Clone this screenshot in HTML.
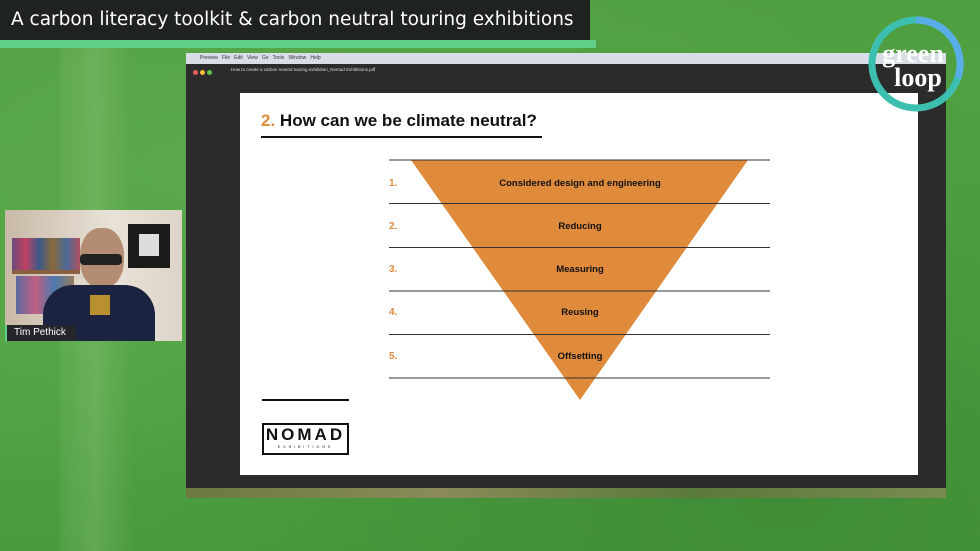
<!DOCTYPE html>
<html><head><meta charset="utf-8"><style>
body{margin:0;width:980px;height:551px;overflow:hidden;position:relative;font-family:"Liberation Sans",sans-serif;
background:radial-gradient(ellipse at 20% 30%,#5aa84a,transparent 60%),radial-gradient(ellipse at 80% 90%,#3f8c36,transparent 60%),linear-gradient(180deg,#4f9e40,#52a546 60%,#4a9a3e);}
.abs{position:absolute}
</style></head><body>
<div class="abs" style="left:60px;top:0;width:70px;height:551px;background:linear-gradient(90deg,rgba(160,200,140,.1),rgba(200,230,180,.18),rgba(120,170,100,.08))"></div>
<div class="abs" style="left:0;top:40px;width:596px;height:8px;background:#5fcf8a"></div>
<div class="abs" style="left:0;top:0;width:590px;height:40px;background:#1f2320"></div>
<div class="abs" style="left:11px;top:9px;color:#fff;font-size:18.5px;font-family:'DejaVu Sans',sans-serif;">A carbon literacy toolkit &amp; carbon neutral touring exhibitions</div>

<div class="abs" style="left:186px;top:53px;width:760px;height:11px;background:#d9dde6"></div>
<div class="abs" style="left:200px;top:55px;font-size:5px;color:#333">Preview &nbsp; File &nbsp; Edit &nbsp; View &nbsp; Go &nbsp; Tools &nbsp; Window &nbsp; Help</div>
<div class="abs" style="left:186px;top:64px;width:760px;height:424px;background:#2b2b2b"></div>
<div class="abs" style="left:193px;top:70px;width:5px;height:5px;border-radius:50%;background:#ed5f56"></div>
<div class="abs" style="left:200px;top:70px;width:5px;height:5px;border-radius:50%;background:#f5bd3b"></div>
<div class="abs" style="left:207px;top:70px;width:5px;height:5px;border-radius:50%;background:#5fc845"></div>
<div class="abs" style="left:231px;top:67px;font-size:4.5px;color:#ddd">How to create a carbon neutral touring exhibition_Nomad Exhibitions.pdf</div>
<div class="abs" style="left:186px;top:488px;width:760px;height:10px;background:linear-gradient(90deg,#6a7a40,#8a8a5a,#5a7a3a,#7a8a50)"></div>

<div class="abs" style="left:240px;top:93px;width:678px;height:382px;background:#fff"></div>
<div class="abs" style="left:261px;top:111px;font-size:17px;font-weight:bold;color:#111"><span style="color:#e08a3c">2.</span> How can we be climate neutral?</div>
<div class="abs" style="left:261px;top:136px;width:281px;height:2px;background:#111"></div>

<svg class="abs" style="left:0;top:0" width="980" height="551">
<polygon points="411,160 748,160 580,400" fill="#e08a3c"/>
<g stroke="#333" stroke-width="1">
<line x1="389" y1="160" x2="770" y2="160"/><line x1="389" y1="203.5" x2="770" y2="203.5"/>
<line x1="389" y1="247.5" x2="770" y2="247.5"/><line x1="389" y1="291" x2="770" y2="291"/>
<line x1="389" y1="334.5" x2="770" y2="334.5"/><line x1="389" y1="378" x2="770" y2="378"/></g>
<g font-family="Liberation Sans" font-size="10" fill="#e08a3c" font-weight="bold">
<text x="389" y="186">1.</text><text x="389" y="229">2.</text><text x="389" y="272">3.</text><text x="389" y="315">4.</text><text x="389" y="359">5.</text></g>
<g font-family="Liberation Sans" font-size="9.5" fill="#111" font-weight="bold" text-anchor="middle">
<text x="580" y="186">Considered design and engineering</text><text x="580" y="229">Reducing</text>
<text x="580" y="272">Measuring</text><text x="580" y="315">Reusing</text><text x="580" y="359">Offsetting</text></g>
<circle cx="916" cy="64" r="44" fill="none" stroke="#3dbfb0" stroke-width="7"/>
<path d="M916 20 A44 44 0 0 1 958 78" fill="none" stroke="#5aaee8" stroke-width="7"/>
<text x="913" y="62" font-family="Liberation Serif" font-size="26" font-weight="bold" fill="#fff" text-anchor="middle">green</text>
<text x="918" y="86" font-family="Liberation Serif" font-size="26" font-weight="bold" fill="#fff" text-anchor="middle">loop</text>
</svg>

<div class="abs" style="left:262px;top:399px;width:87px;height:2px;background:#111"></div>
<div class="abs" style="left:262px;top:423px;width:83px;height:28px;border:2px solid #111;text-align:center">
<div style="font-size:17px;font-weight:bold;letter-spacing:3px;line-height:20px;color:#111">NOMAD</div>
<div style="font-size:3.5px;letter-spacing:3px;color:#111">EXHIBITIONS</div></div>

<div class="abs" style="left:5px;top:210px;width:177px;height:131px;background:linear-gradient(90deg,#c9b9a6,#e8e2d8 60%,#ddd5c8)"></div>
<div class="abs" style="left:12px;top:238px;width:68px;height:32px;background:linear-gradient(90deg,#6a4a7a,#c04060,#3a5a8a,#8a6a3a,#4a6a9a,#b05060)"></div>
<div class="abs" style="left:12px;top:270px;width:68px;height:4px;background:#8a6040"></div>
<div class="abs" style="left:16px;top:276px;width:58px;height:38px;background:linear-gradient(90deg,#5a6aa0,#c06080,#4a7ab0,#9a7a5a)"></div>
<div class="abs" style="left:128px;top:224px;width:42px;height:44px;background:#1b1b1b"></div>
<div class="abs" style="left:139px;top:234px;width:20px;height:22px;background:#ddd"></div>
<div class="abs" style="left:80px;top:228px;width:44px;height:60px;border-radius:45%;background:#b48c72"></div>
<div class="abs" style="left:80px;top:254px;width:42px;height:11px;background:#222;border-radius:4px"></div>
<div class="abs" style="left:43px;top:285px;width:112px;height:56px;border-radius:30px 30px 0 0;background:#1c2340"></div>
<div class="abs" style="left:90px;top:295px;width:20px;height:20px;background:#b89030"></div>
<div class="abs" style="left:5px;top:325px;width:69px;height:16px;background:#24262b;border-left:2px solid #5fcf8a"></div>
<div class="abs" style="left:14px;top:327px;color:#fff;font-size:10px">Tim Pethick</div>
</body></html>
